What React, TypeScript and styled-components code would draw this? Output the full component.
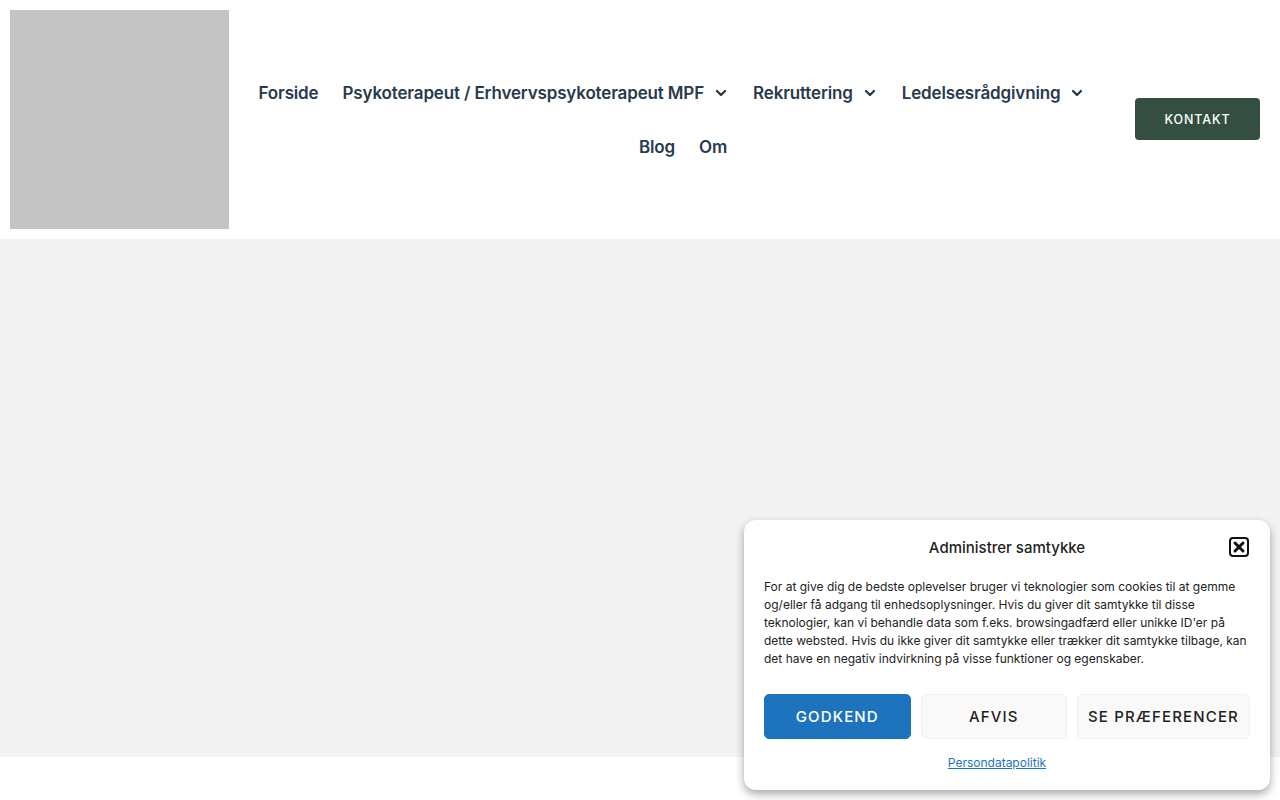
import React from 'react';
import styled, { createGlobalStyle } from 'styled-components';

const GlobalStyle = createGlobalStyle`
  html, body {
    margin: 0;
    padding: 0;
    background: #ffffff;
    font-family: Inter, 'Noto Sans', sans-serif;
  }
  * { box-sizing: border-box; }
`;

const Page = styled.div`
  width: 1280px;
  height: 800px;
  position: relative;
  overflow: hidden;
  background: #ffffff;
`;

const Header = styled.header`
  height: 239px;
  display: flex;
  align-items: center;
  padding: 10px 20px 10px 10px;
`;

const Logo = styled.div`
  width: 219px;
  height: 219px;
  background: #c4c4c4;
  flex-shrink: 0;
`;

const Nav = styled.nav`
  flex: 1;
  display: flex;
  flex-wrap: wrap;
  justify-content: center;
  align-content: center;
  padding: 0 10px 0 12px;
  row-gap: 18px;
`;

const NavItem = styled.a<{ $dropdown?: boolean; $trail?: boolean }>`
  display: flex;
  align-items: center;
  gap: 11px;
  padding: 0 ${(p) => (p.$dropdown ? '14px' : '12px')} 0 12px;
  margin-right: ${(p) => (p.$trail ? '22px' : '0')};
  height: 36px;
  color: #283a4d;
  font-family: Inter, 'Noto Sans', sans-serif;
  font-size: 17px;
  font-weight: 600;
  letter-spacing: -0.15px;
  text-decoration: none;
  white-space: nowrap;
`;

const Chevron = () => (
  <svg width="12" height="8" viewBox="0 0 12 8" fill="none">
    <path d="M2 2L6 6L10 2" stroke="#283a4d" strokeWidth="2.3" strokeLinecap="round" strokeLinejoin="round" />
  </svg>
);

const ContactButton = styled.a`
  flex-shrink: 0;
  width: 125px;
  height: 42px;
  margin-top: -1px;
  display: flex;
  align-items: center;
  justify-content: center;
  background: #344f41;
  color: #ffffff;
  border-radius: 4px;
  font-size: 12.5px;
  font-weight: 500;
  letter-spacing: 0.9px;
  text-decoration: none;
`;

const Hero = styled.section`
  height: 518px;
  background: #f3f3f3;
`;

const Banner = styled.div`
  position: absolute;
  left: 744px;
  top: 520px;
  width: 526px;
  height: 270px;
  background: #ffffff;
  border-radius: 12px;
  box-shadow: 0 4px 10px rgba(0, 0, 0, 0.35);
  padding: 16px 20px 0 20px;
  display: flex;
  flex-direction: column;
  color: #222222;
`;

const BannerHead = styled.div`
  position: relative;
  height: 22px;
  display: flex;
  align-items: center;
  justify-content: center;
`;

const BannerTitle = styled.h2`
  margin: 0;
  font-size: 15px;
  font-weight: 500;
  color: #222222;
`;

const CloseButton = styled.button`
  position: absolute;
  right: 0;
  top: 0;
  width: 22px;
  height: 22px;
  padding: 0;
  border: none;
  background: none;
  display: flex;
  align-items: center;
  justify-content: center;
`;

const BannerText = styled.p`
  margin: 20px 0 0 0;
  font-size: 12px;
  line-height: 18px;
  color: #222222;
`;

const ButtonRow = styled.div`
  display: flex;
  gap: 10px;
  margin-top: 26px;
`;

const ConsentButton = styled.button<{ $primary?: boolean }>`
  flex: 1 1 0;
  height: 45px;
  padding: 0 10px;
  border-radius: 5px;
  border: 1px solid ${(p) => (p.$primary ? '#1e73be' : '#f2f2f2')};
  background: ${(p) => (p.$primary ? '#1e73be' : '#f9f9f9')};
  color: ${(p) => (p.$primary ? '#ffffff' : '#222222')};
  font-family: Inter, 'Noto Sans', sans-serif;
  font-size: 15px;
  font-weight: 500;
  letter-spacing: 1.15px;
  white-space: nowrap;
`;

const PolicyLink = styled.a`
  margin: 16px 20px 0 0;
  align-self: center;
  font-size: 12px;
  color: #1e73be;
  text-decoration: underline;
`;

export default function App() {
  return (
    <Page>
      <GlobalStyle />
      <Header>
        <Logo />
        <Nav>
          <NavItem>Forside</NavItem>
          <NavItem $dropdown>
            Psykoterapeut / Erhvervspsykoterapeut MPF <Chevron />
          </NavItem>
          <NavItem $dropdown>
            Rekruttering <Chevron />
          </NavItem>
          <NavItem $dropdown $trail>
            Ledelsesrådgivning <Chevron />
          </NavItem>
          <NavItem>Blog</NavItem>
          <NavItem>Om</NavItem>
        </Nav>
        <ContactButton>KONTAKT</ContactButton>
      </Header>
      <Hero />
      <Banner>
        <BannerHead>
          <BannerTitle>Administrer samtykke</BannerTitle>
          <CloseButton aria-label="Luk">
            <svg width="22" height="22" viewBox="0 0 22 22" fill="none">
              <rect x="2" y="2" width="18" height="18" rx="3" stroke="#111" strokeWidth="2" />
              <path d="M7 7L15 15M15 7L7 15" stroke="#111" strokeWidth="3" strokeLinecap="round" />
            </svg>
          </CloseButton>
        </BannerHead>
        <BannerText>
          For at give dig de bedste oplevelser bruger vi teknologier som cookies til at gemme og/eller få adgang til
          enhedsoplysninger. Hvis du giver dit samtykke til disse teknologier, kan vi behandle data som f.eks.
          browsingadfærd eller unikke ID'er på dette websted. Hvis du ikke giver dit samtykke eller trækker dit
          samtykke tilbage, kan det have en negativ indvirkning på visse funktioner og egenskaber.
        </BannerText>
        <ButtonRow>
          <ConsentButton $primary>GODKEND</ConsentButton>
          <ConsentButton>AFVIS</ConsentButton>
          <ConsentButton>SE PRÆFERENCER</ConsentButton>
        </ButtonRow>
        <PolicyLink>Persondatapolitik</PolicyLink>
      </Banner>
    </Page>
  );
}
